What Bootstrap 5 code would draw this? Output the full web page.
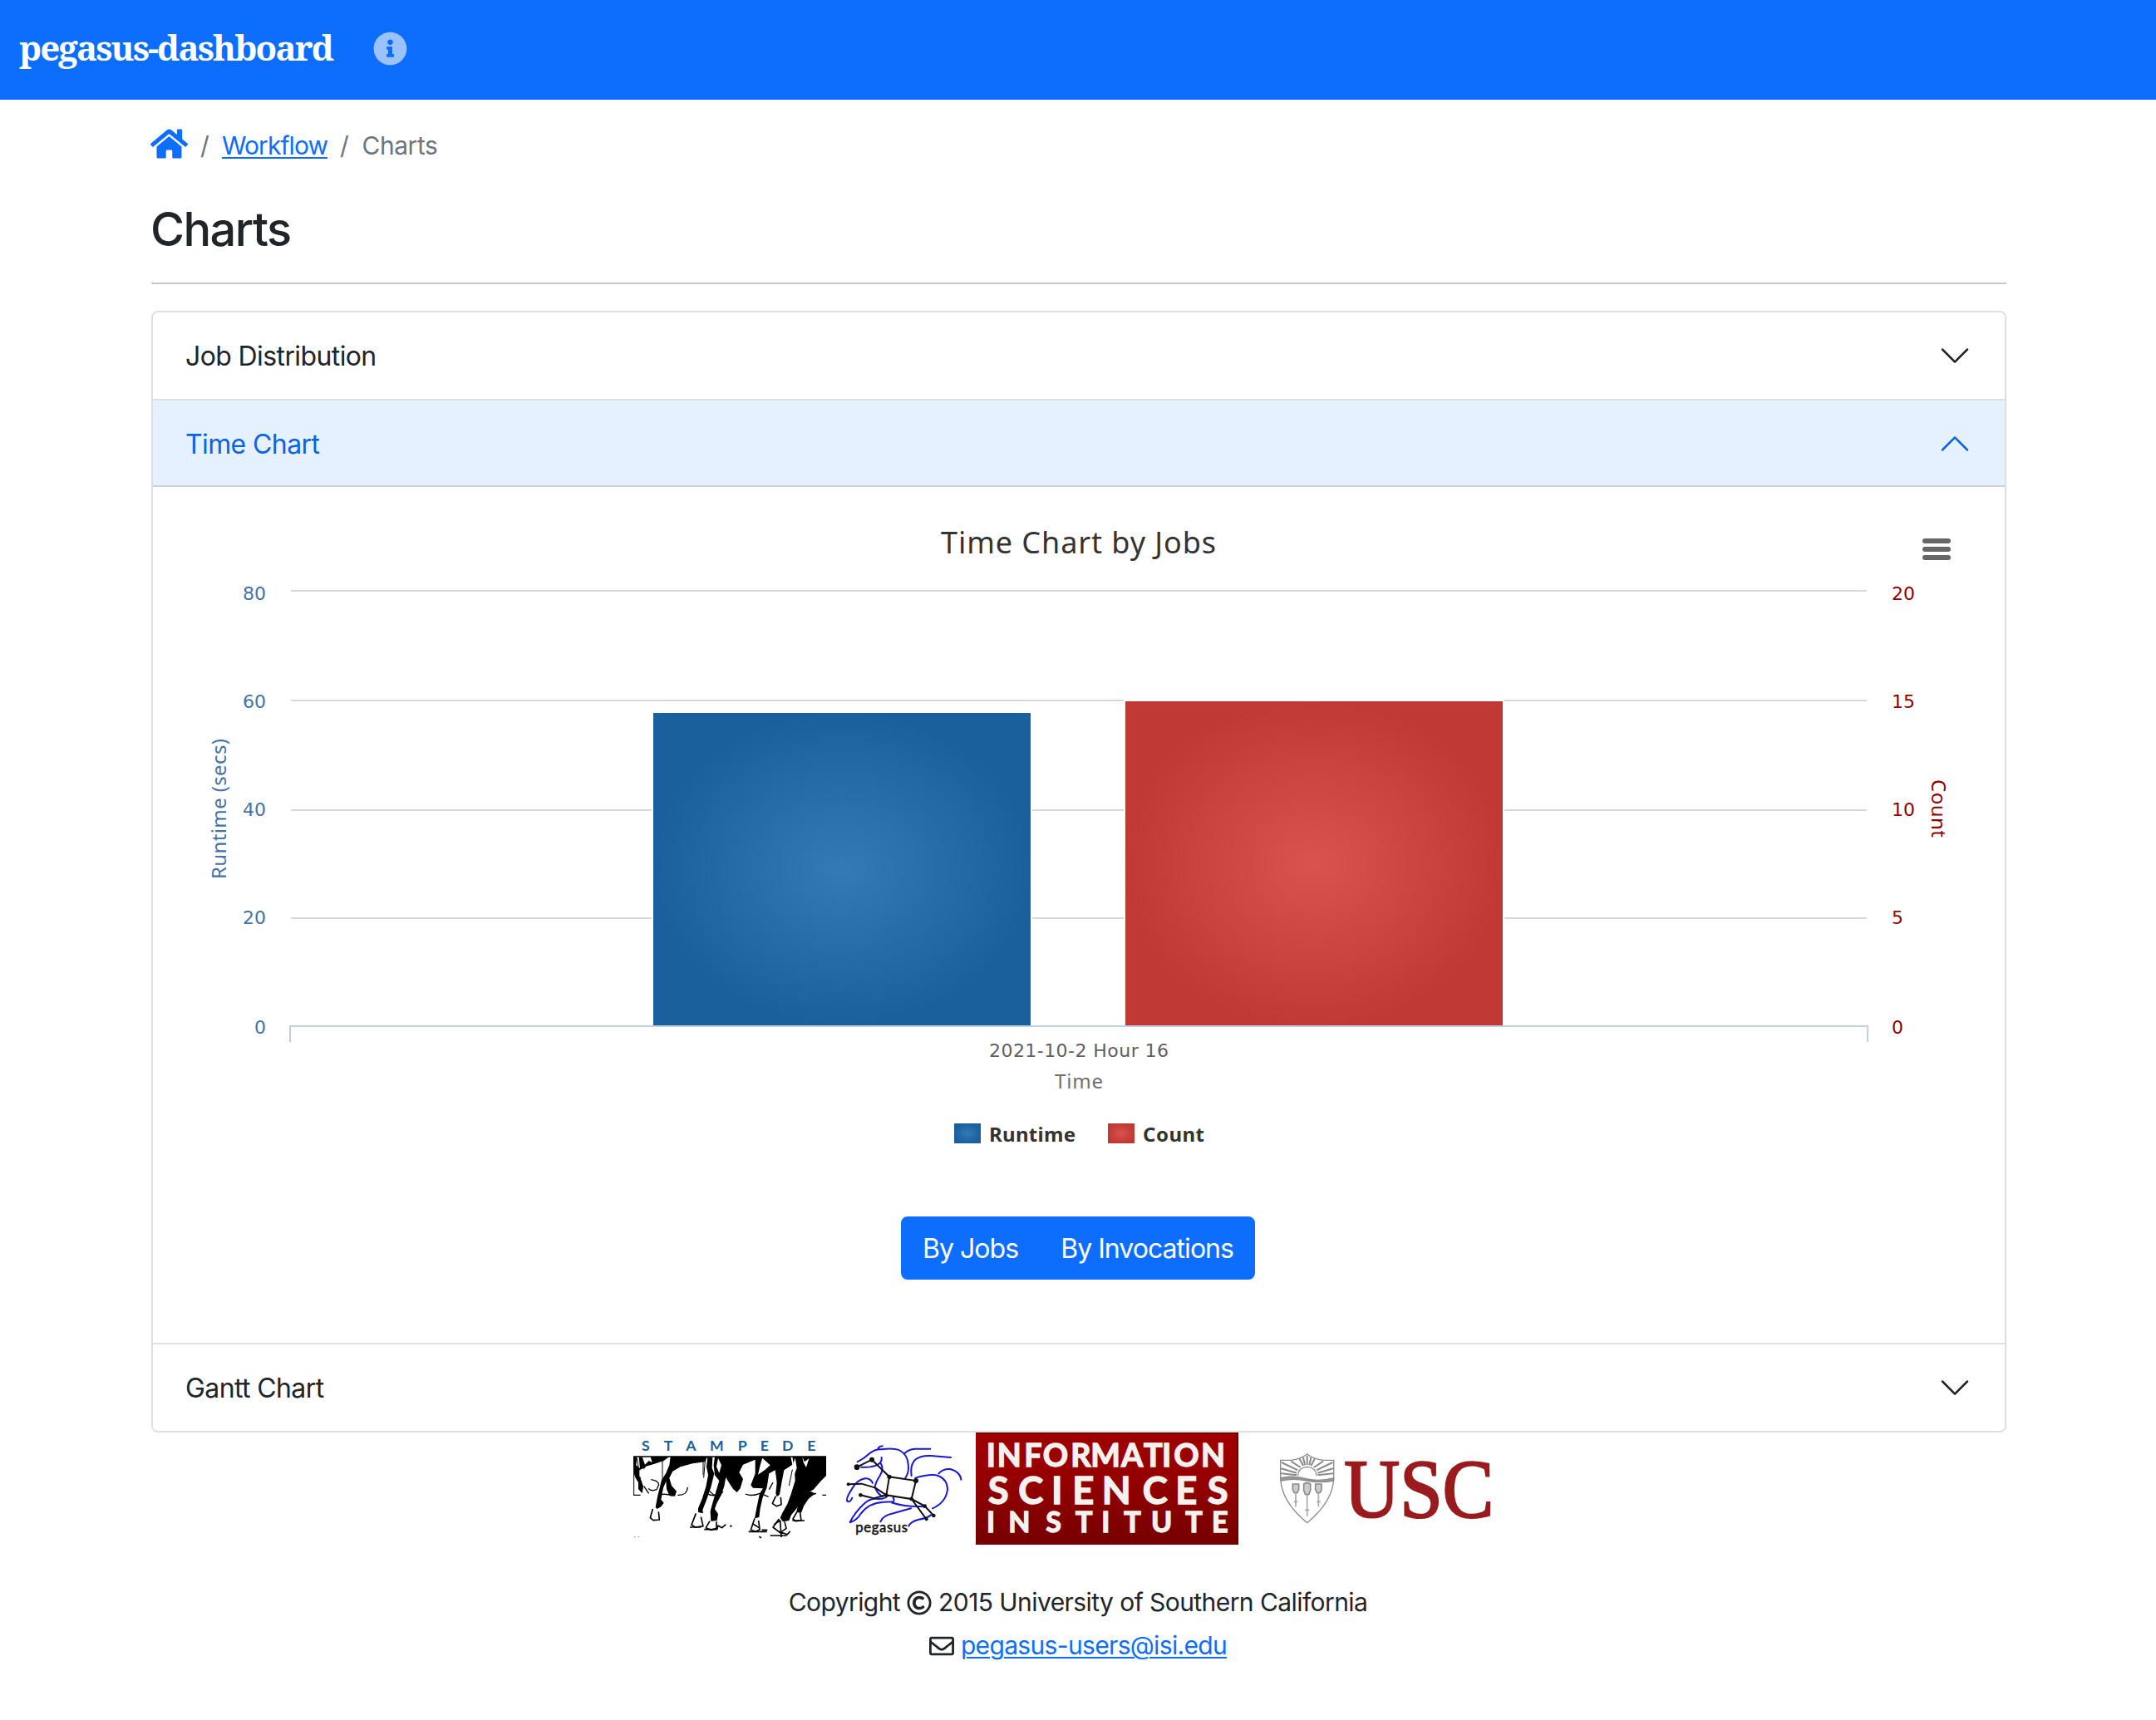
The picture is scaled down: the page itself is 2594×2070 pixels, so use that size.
<!DOCTYPE html>
<html lang="en">
<head>
<meta charset="utf-8">
<meta name="viewport" content="width=device-width, initial-scale=1">
<title>pegasus-dashboard: Charts</title>
<link href="https://cdn.jsdelivr.net/npm/bootstrap@5.3.0/dist/css/bootstrap.min.css" rel="stylesheet">
<style>
  html { font-size: 32px; }
  body { font-family: Inter, "Liberation Sans", sans-serif; font-size: 30px; line-height: 1.5; letter-spacing: -.019em; color: #212529; background: #fff; }
  a { color: #0d6efd; }
  .topbar { height: 120px; padding: 0 23px 3px; background: #0d6efd; }
  .topbar .navbar-brand { font-family: "Noto Serif", "DejaVu Serif Condensed", serif; font-weight: 700; font-size: 42px; letter-spacing: -1.9px; margin: 0 49px 4px 0; padding: 0; line-height: 60px; color: #fff; }
  .info-icon { width: 41px; height: 41px; fill: #fff; opacity: .58; display: block; }
  .page-wrap { max-width: 2282px; padding: 33px 24px 0 26px; }
  .crumbs { height: 45px; margin: 0 0 45px -1px; flex-wrap: nowrap; letter-spacing: -.031em; }
  .crumbs .breadcrumb-item + .breadcrumb-item { padding-left: 15px; }
  .crumbs .breadcrumb-item + .breadcrumb-item::before { padding-right: 16px; color: #6c757d; }
  .crumbs .breadcrumb-item.active { color: #6c757d; letter-spacing: -.015em; }
  .crumbs a, .mail-link { text-underline-offset: 3px; text-decoration-thickness: 2px; }
  .mail-link { letter-spacing: -.022em; }
  .home-icon { width: 45px; height: 40px; fill: #0d6efd; display: block; }
  .page-title { font-size: 56px; font-weight: 500; line-height: 1.2; letter-spacing: -.028em; margin: 0 0 30px -1px; }
  .rule { height: 2px; margin: 0 0 32px; background: #c8c8c8; border: 0; opacity: 1; }
  .accordion { --bs-accordion-border-width: 2px; --bs-accordion-border-color: #dfdfdf; --bs-accordion-border-radius: 8px; --bs-accordion-inner-border-radius: 6px; --bs-accordion-active-bg: #e5f1fe; --bs-accordion-active-color: #0c63e4; --bs-accordion-btn-color: #212529;
    --bs-accordion-btn-active-icon: url("data:image/svg+xml,%3csvg xmlns='http://www.w3.org/2000/svg' viewBox='0 0 16 16' fill='%230c63e4'%3e%3cpath fill-rule='evenodd' d='M1.646 4.646a.5.5 0 0 1 .708 0L8 10.293l5.646-5.647a.5.5 0 0 1 .708.708l-6 6a.5.5 0 0 1-.708 0l-6-6a.5.5 0 0 1 0-.708z'/%3e%3c/svg%3e"); }
  .accordion-button { font-size: 32px; line-height: 40px; height: 104px; padding: 33px 40px 31px 39px; letter-spacing: -.019em; }
  .accordion-button::after { margin-top: -2px; }
  .accordion-button:not(.collapsed) { box-shadow: inset 0 -2px 0 #c9d3e2; }
  .chart-body { padding: 32px 41px 76px 39px; }
  .time-chart { width: 2148px; height: 800px; font-family: "Noto Sans", "Open Sans", sans-serif; font-size: 24px; letter-spacing: 0; }
  .time-chart .tick-num { font-family: "DejaVu Sans", sans-serif; font-size: 22px; }
  .mode-group { margin-top: 46px; }
  .mode-group .btn { font-size: 32px; line-height: 48px; padding: 13px 24px 11px; border-width: 2px; border-radius: 8px; letter-spacing: -.03em; }
  .logo { height: 135px; flex: none; display: block; font-variant-ligatures: none; letter-spacing: 0; }
  .logo-stampede { width: 232px; }
  .logo-pegasus { width: 164px; margin-left: 16px; }
  .logo-isi { width: 316px; }
  .logo-usc { width: 342px; }
  .foot-lines { margin-top: 47px; }
  .foot-lines p { margin: 0 0 7px; line-height: 45px; gap: 8px; }
  .glyph { width: 30px; height: 30px; fill: #212529; }
</style>
</head>
<body>
<nav class="navbar topbar justify-content-start flex-nowrap">
  <a class="navbar-brand" href="#">pegasus-dashboard</a>
  <a href="#" aria-label="About"><svg class="info-icon" viewBox="0 0 512 512"><path d="M256 8C119.043 8 8 119.083 8 256c0 136.997 111.043 248 248 248s248-111.003 248-248C504 119.083 392.957 8 256 8zm0 110c23.196 0 42 18.804 42 42s-18.804 42-42 42-42-18.804-42-42 18.804-42 42-42zm56 254c0 6.627-5.373 12-12 12h-88c-6.627 0-12-5.373-12-12v-24c0-6.627 5.373-12 12-12h12v-64h-12c-6.627 0-12-5.373-12-12v-24c0-6.627 5.373-12 12-12h64c6.627 0 12 5.373 12 12v100h12c6.627 0 12 5.373 12 12v24z"/></svg></a>
</nav>

<main class="container-fluid page-wrap">
  <ol class="breadcrumb crumbs">
    <li class="breadcrumb-item"><a href="#" aria-label="Home"><svg class="home-icon" viewBox="0 0 576 512"><path d="M280.37 148.26L96 300.11V464a16 16 0 0 0 16 16l112.06-.29a16 16 0 0 0 15.92-16V368a16 16 0 0 1 16-16h64a16 16 0 0 1 16 16v95.64a16 16 0 0 0 16 16.05L464 480a16 16 0 0 0 16-16V300L295.67 148.26a12.19 12.19 0 0 0-15.3 0zM571.6 251.47L488 182.56V44.05a12 12 0 0 0-12-12h-56a12 12 0 0 0-12 12v72.61L318.47 43a48 48 0 0 0-61 0L4.34 251.47a12 12 0 0 0-1.6 16.9l25.5 31A12 12 0 0 0 45.15 301l235.22-193.74a12.19 12.19 0 0 1 15.3 0L530.9 301a12 12 0 0 0 16.9-1.6l25.5-31a12 12 0 0 0-1.7-16.93z"/></svg></a></li>
    <li class="breadcrumb-item"><a href="#">Workflow</a></li>
    <li class="breadcrumb-item active">Charts</li>
  </ol>
  <h1 class="page-title">Charts</h1>
  <hr class="rule">

  <div class="accordion">
    <div class="accordion-item">
      <h2 class="accordion-header"><button class="accordion-button collapsed" type="button">Job Distribution</button></h2>
    </div>
    <div class="accordion-item">
      <h2 class="accordion-header"><button class="accordion-button" type="button">Time Chart</button></h2>
      <div class="accordion-collapse collapse show">
        <div class="accordion-body chart-body d-flex flex-column align-items-center">
          <svg class="time-chart" viewBox="223 618 2148 800">
            <defs>
              <radialGradient id="runtimeFill"><stop offset="0" stop-color="#337ab7"/><stop offset="1" stop-color="#19609d"/></radialGradient>
              <radialGradient id="countFill"><stop offset="0" stop-color="#d9534f"/><stop offset="1" stop-color="#bf3935"/></radialGradient>
            </defs>
            <text x="1132" y="666" font-size="36" fill="#333" textLength="331">Time Chart by Jobs</text>
            <path d="M2316 651h28M2316 661h28M2316 671h28" stroke="#666" stroke-width="6" stroke-linecap="round"/>
            <path d="M350 711H2246M350 843H2246M350 975H2246M350 1105H2246" stroke="#d8d8d8" stroke-width="2"/>
            <rect x="785" y="857" width="456" height="378" fill="url(#runtimeFill)" stroke="#fff" stroke-width="2"/>
            <rect x="1353" y="843" width="456" height="392" fill="url(#countFill)" stroke="#fff" stroke-width="2"/>
            <path d="M349 1254V1235H2247V1254" fill="none" stroke="#c0d0e0" stroke-width="2"/>
            <g class="tick-num" fill="#4572a7" text-anchor="end">
              <text x="320" y="722">80</text><text x="320" y="852">60</text><text x="320" y="982">40</text><text x="320" y="1112">20</text><text x="320" y="1244">0</text>
            </g>
            <g class="tick-num" fill="#910000">
              <text x="2276" y="722">20</text><text x="2276" y="852">15</text><text x="2276" y="982">10</text><text x="2276" y="1112">5</text><text x="2276" y="1244">0</text>
            </g>
            <text transform="translate(272 1058) rotate(-90)" fill="#4572a7" textLength="169">Runtime (secs)</text>
            <text transform="translate(2324 938) rotate(90)" fill="#910000" textLength="70">Count</text>
            <text class="tick-num" x="1190" y="1272" fill="#606060" textLength="216">2021-10-2 Hour 16</text>
            <text x="1269" y="1310" fill="#707070" textLength="58">Time</text>
            <rect x="1148" y="1352" width="32" height="24" fill="url(#runtimeFill)"/>
            <text x="1190" y="1374" font-weight="700" fill="#333" textLength="104">Runtime</text>
            <rect x="1333" y="1352" width="32" height="24" fill="url(#countFill)"/>
            <text x="1375" y="1374" font-weight="700" fill="#333" textLength="74">Count</text>
          </svg>
          <div class="btn-group mode-group">
            <button type="button" class="btn btn-primary">By Jobs</button>
            <button type="button" class="btn btn-primary">By Invocations</button>
          </div>
        </div>
      </div>
    </div>
    <div class="accordion-item">
      <h2 class="accordion-header"><button class="accordion-button collapsed" type="button">Gantt Chart</button></h2>
    </div>
  </div>
</main>

<footer>
  <div class="d-flex justify-content-center align-items-start">
    <!-- Stampede: running legs under the wordmark -->
    <svg class="logo logo-stampede" viewBox="66 42 696 405">
      <text y="107" x="96 176 256 342 443 524 603 694" font-family="Lato" font-weight="700" font-size="53" fill="#1a5f9f">STAMPEDE</text>
      <path d="M66 129H762" stroke="#000" stroke-width="4"/>
      <path d="M66 130L80 130 76 160 90 172 86 130 98 130 108 158 122 144 134 150 128 130 196 129 176 144 140 156 112 164 98 182 92 208 102 236 98 262 84 246 84 222 74 206 68 190z
        M200 129L334 129 324 148 280 154 236 166 208 182 196 206 204 234 222 254 216 272 196 270 186 246 184 218 174 242 166 284 176 296 166 310 152 318 146 312 154 270 168 214 184 188 196 160z
        M334 129L352 132 350 170 358 190 346 240 330 286 316 322 318 334 300 330 300 316 314 282 328 238 336 196 330 166z
        M360 129L520 129 502 142 462 158 448 186 462 210 452 244 440 258 426 246 412 224 400 204 394 236 384 266 366 300 360 318 372 336 368 360 346 362 344 326 352 296 364 256 376 216 360 196 356 160z
        M506 129L634 129 640 158 610 178 600 230 594 266 584 274 580 262 584 222 578 178 556 190 548 240 532 280 524 316 520 348 504 352 512 310 522 262 534 244 498 242 490 232 506 190z
        M640 129L762 129 762 198 742 218 716 248 690 262 676 282 656 316 636 340 628 360 606 364 596 350 604 332 622 300 634 268 650 216 648 180z
        M700 252L722 262 698 282 682 306 672 332 654 330 662 300 676 272z"/>
      <g fill="#fff">
        <path d="M532 134L560 160 542 176 516 194 524 160zM650 134L656 170 640 214 622 252 634 196 640 162zM676 130L684 148 700 136 690 168 680 150zM372 134L366 166 376 188 384 160zM88 178L104 170 96 206 88 200z"/>
      </g>
      <g fill="none" stroke="#000" stroke-width="5" stroke-linejoin="round">
        <path d="M171 129V215M68 130V268M80 136L86 180M318 130V196M326 134L320 206M640 176L628 234M742 158L722 186" stroke-width="3"/>
        <path d="M136 318L127 350 138 359 160 357 157 328M292 334L276 376 290 384 318 380 310 346M342 362L328 386 346 394 366 388 366 364M504 352L490 394 508 400 522 392 518 360M580 272L568 298 582 308 600 302 598 276M656 330L642 354 652 362 672 360 668 332M592 354L570 384 596 404 618 388 612 364"/>
        <path d="M66 268H92M104 236l18 26M130 212q26 4 28 18l-8 18q-20 8 -30 -4M164 266q20 -4 44 4M226 268q34 2 36 -28M330 262q34 18 60 -6M470 264q24 10 52 -2M570 222l-14 26M748 268h14M336 246q16 26 40 24M534 266l20 8M700 270l26 -8" stroke-width="4"/>
        <path d="M270 384h40M322 392h46l4 -14 14 8 14 -12M414 380h8M482 400h66M530 394h20M560 414h60M592 400l30 10 10 -12M640 360h44M520 418l8 4M574 374l22 -14 4 60M498 372l22 14"/>
        <path d="M68 420l6 -2M82 420l6 -3" stroke="#999" stroke-width="3"/>
      </g>
    </svg>
    <!-- Pegasus: winged horse sketch with constellation -->
    <svg class="logo logo-pegasus" viewBox="810 42 492 405">
      <path fill="none" stroke="#1a17d0" stroke-width="6" stroke-linecap="round" d="M875 148Q900 136 922 115Q942 100 964 103M948 103Q952 92 965 91M968 102Q1012 98 1030 108Q1056 124 1058 156Q1062 186 1048 206M1043 120Q1054 104 1082 101L1138 101M1070 198Q1064 156 1086 138Q1106 124 1140 126L1212 132M888 167Q926 170 948 158Q964 150 962 132M958 152Q972 172 956 198Q940 222 938 240Q950 268 966 272M930 224Q920 206 902 208Q872 214 856 244Q832 280 838 290Q848 296 856 278M848 366Q866 330 898 300Q920 278 952 282Q976 282 984 270M850 366Q872 360 888 334Q916 296 968 293L1004 292M1004 276Q1010 290 1002 296Q1056 312 1118 308M1068 316L1004 334Q966 342 958 364M1084 206Q1130 192 1158 196Q1198 206 1200 246Q1196 294 1146 316M1168 190Q1184 172 1210 174Q1246 184 1249 212M1060 380Q1066 364 1096 356Q1124 352 1140 340"/>
      <path fill="none" stroke="#111" stroke-width="6" d="M873 167L927 140 990 202 1086 216 1070 282 979 268 990 202M842 229L890 227 940 242 979 268 934 280 886 268M1070 282L1118 308 1150 342M1070 282L1124 355"/>
      <g fill="#111"><circle cx="873" cy="167" r="10"/><circle cx="927" cy="140" r="9"/><circle cx="990" cy="202" r="8"/><circle cx="1086" cy="216" r="9"/><circle cx="979" cy="268" r="7"/><circle cx="1070" cy="282" r="7"/><circle cx="886" cy="268" r="7"/><circle cx="842" cy="229" r="6"/><circle cx="1118" cy="308" r="7"/><circle cx="1150" cy="342" r="7"/><circle cx="1124" cy="355" r="6"/></g>
      <text x="868" y="402" font-family="Lato" font-size="50" fill="#111" stroke="#111" stroke-width="1.5" textLength="188">pegasus</text>
    </svg>
    <!-- Information Sciences Institute -->
    <svg class="logo logo-isi" viewBox="42 42 948 405">
      <defs><linearGradient id="isiFill" x2="0" y2="1"><stop offset="0" stop-color="#a00000"/><stop offset=".4" stop-color="#960000"/><stop offset="1" stop-color="#760000"/></linearGradient></defs>
      <rect x="42" y="42" width="948" height="405" fill="url(#isiFill)"/>
      <path d="M42 44H988V447" fill="none" stroke="#600000" stroke-width="5"/>
      <g fill="#f4f1ee" stroke="#f4f1ee" stroke-width="4" font-family="Lato" font-weight="700">
        <text font-size="113" y="166" x="80 119 217 284 385 457 567 648 714 757 855">INFORMATION</text>
        <text font-size="136" y="301" x="86 196 315 391 497 644 763 878">SCIENCES</text>
        <text font-size="102" y="403" x="81 160 295 402 496 577 675 799 894">INSTITUTE</text>
      </g>
    </svg>
    <!-- USC shield and wordmark -->
    <svg class="logo logo-usc" viewBox="-30 42 1026 405">
      <g fill="none" stroke="#8b8b8b" stroke-width="4" stroke-linejoin="round">
        <path d="M122 142H160Q196 138 218 120Q240 138 276 142H314V206Q312 290 218 368Q124 290 122 206z"/>
        <path d="M124 206Q170 196 218 210Q266 220 314 206V216Q266 226 218 216Q170 206 124 216z" fill="#999"/>
        <path d="M184 198Q186 168 218 166Q250 168 252 198" fill="#fff"/>
        <path d="M218 160V126M204 162L190 136M232 162L246 136M194 168L160 146M242 168L276 146M184 178L126 150M252 178L310 150M180 188L124 172M256 188L312 172M180 196L124 190M256 196L312 190M210 160L204 132M226 160L232 132" stroke-width="6"/>
        <path d="M166 228h22v20l-6 12h-10l-6 -12zM206 228q12 -8 24 0v24l-6 14h-12l-6 -14zM248 228h22v20l-6 12h-10l-6 -12z" fill="#ccc" stroke-width="5"/>
        <path d="M177 262V310M218 268V344M259 262V310M170 292h14M210 322h16M252 292h14" stroke="#aaa" stroke-width="5"/>
      </g>
      <text x="352" y="345" font-family="Liberation Serif" font-size="298" fill="#991b1e" stroke="#991b1e" stroke-width="7" textLength="540" lengthAdjust="spacingAndGlyphs">USC</text>
    </svg>
  </div>
  <div class="foot-lines">
    <p class="d-flex justify-content-center align-items-center"><span>Copyright</span><svg class="glyph" viewBox="0 0 512 512"><path d="M256 8C119.033 8 8 119.033 8 256s111.033 248 248 248 248-111.033 248-248S392.967 8 256 8zm0 448c-110.532 0-200-89.451-200-200 0-110.531 89.451-200 200-200 110.532 0 200 89.451 200 200 0 110.532-89.451 200-200 200zm107.351-101.064c-9.614 9.712-45.53 41.396-104.065 41.396-82.43 0-140.484-61.425-140.484-141.567 0-79.152 60.275-139.401 139.762-139.401 55.531 0 88.738 26.62 97.593 34.779a11.965 11.965 0 0 1 1.936 15.322l-18.155 28.113c-3.841 5.95-11.966 7.282-17.499 2.921-8.595-6.776-31.814-22.538-61.708-22.538-48.303 0-77.916 35.33-77.916 80.082 0 41.589 26.888 83.692 78.277 83.692 32.657 0 56.843-19.039 65.726-27.225 5.27-4.857 13.596-4.039 17.82 1.738l19.865 27.17a11.947 11.947 0 0 1-1.152 15.518z"/></svg><span>2015 University of Southern California</span></p>
    <p class="d-flex justify-content-center align-items-center"><svg class="glyph" viewBox="0 0 512 512"><path d="M464 64H48C21.49 64 0 85.49 0 112v288c0 26.51 21.49 48 48 48h416c26.51 0 48-21.49 48-48V112c0-26.51-21.49-48-48-48zm0 48v40.805c-22.422 18.259-58.168 46.651-134.587 106.49-16.841 13.247-50.201 45.072-73.413 44.701-23.208.375-56.579-31.459-73.413-44.701C106.18 199.465 70.425 171.067 48 152.805V112h416zM48 400V214.398c22.914 18.251 55.409 43.862 104.938 82.646 21.857 17.205 60.134 55.186 103.062 54.955 42.717.231 80.509-37.199 103.053-54.947 49.528-38.783 82.032-64.401 104.947-82.653V400H48z"/></svg><a class="mail-link" href="#">pegasus-users@isi.edu</a></p>
  </div>
</footer>
<script src="https://cdn.jsdelivr.net/npm/bootstrap@5.3.0/dist/js/bootstrap.bundle.min.js"></script>
</body>
</html>
